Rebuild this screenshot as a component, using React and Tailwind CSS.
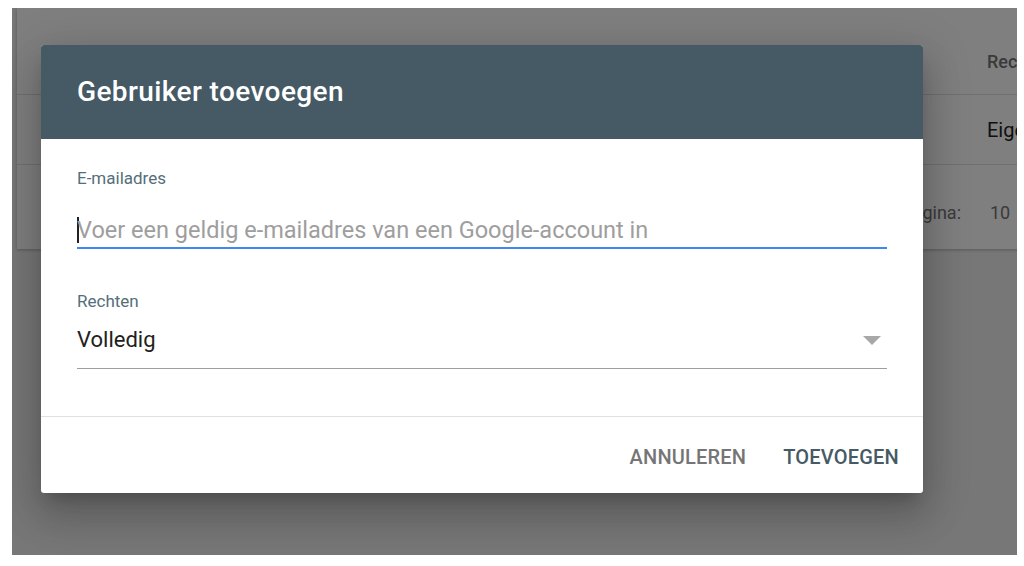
import React from 'react';

const ROBOTO = { fontFamily: 'Roboto, "Liberation Sans", sans-serif' };

const UsersTable = () => (
  <div className="ml-[5px] w-[1200px] bg-white shadow-[0_1px_3px_rgba(0,0,0,0.25)]">
    <div className="h-[87px] flex items-end pb-[19px] border-b border-[#e0e0e0]">
      <div className="w-[970px] shrink-0" />
      <span className="text-[18px] font-medium text-[#757575]">Rechten</span>
    </div>
    <div className="h-[70px] flex items-center border-b border-[#e0e0e0]">
      <div className="w-[970px] shrink-0" />
      <span className="text-[20px] text-[#212121]">Eigenaar</span>
    </div>
    <div className="h-[84px] flex items-center pt-[10px] text-[18px] text-[#757575]">
      <span className="w-[944px] shrink-0 text-right">Rijen per pagina:</span>
      <span className="ml-[29px]">10</span>
    </div>
  </div>
);

const AddUserDialog = () => (
  <div className="absolute left-[29px] top-[37px] w-[882px] h-[448px] bg-white rounded-[3px] overflow-hidden flex flex-col shadow-[0_11px_15px_-7px_rgba(0,0,0,0.2),0_24px_38px_3px_rgba(0,0,0,0.14),0_9px_46px_8px_rgba(0,0,0,0.12)]">
    <div className="h-[94px] shrink-0 bg-[#455a64] flex items-center px-[36px]">
      <h2 className="text-[28px] font-medium text-white tracking-[0.4px]">Gebruiker toevoegen</h2>
    </div>

    <div className="flex-1 px-[36px] pt-[28px]">
      <label className="block text-[17px] text-[#546e7a] leading-[22px]">E-mailadres</label>
      <div className="h-[60px] flex items-end pb-[2px] border-b-2 border-[#4285f4]">
        <div className="h-[30px] flex items-center">
          <span className="w-[2px] h-[26px] bg-[#212121] mr-[-2px]" />
          <span className="text-[23.5px] leading-[30px] text-[#9e9e9e]">Voer een geldig e-mailadres van een Google-account in</span>
        </div>
      </div>

      <label className="block mt-[41px] text-[17px] text-[#546e7a] leading-[22px]">Rechten</label>
      <div className="h-[57px] flex items-center justify-between border-b border-[#9e9e9e]">
        <span className="text-[22px] leading-[30px] text-[#212121]">Volledig</span>
        <svg width="18" height="9" viewBox="0 0 18 9" className="mr-[6px]">
          <path d="M0 0h18L9 9z" fill="#a8a8a8" />
        </svg>
      </div>
    </div>

    <div className="h-[77px] shrink-0 border-t border-[#e0e0e0] flex items-center justify-end pt-[3px] pr-[24px] gap-[37px]">
      <button className="text-[20px] font-medium text-[#757575] tracking-[0.2px]">ANNULEREN</button>
      <button className="text-[20px] font-medium text-[#455a64] tracking-[0.2px]">TOEVOEGEN</button>
    </div>
  </div>
);

export default function App() {
  return (
    <div className="w-[1024px] h-[566px] bg-white pl-[12px] pt-[8px]" style={ROBOTO}>
      <div className="relative w-[1005px] h-[547px] bg-[#eeeeee] overflow-hidden">
        <UsersTable />
        <div className="absolute inset-0 bg-black/50" />
        <AddUserDialog />
      </div>
    </div>
  );
}
